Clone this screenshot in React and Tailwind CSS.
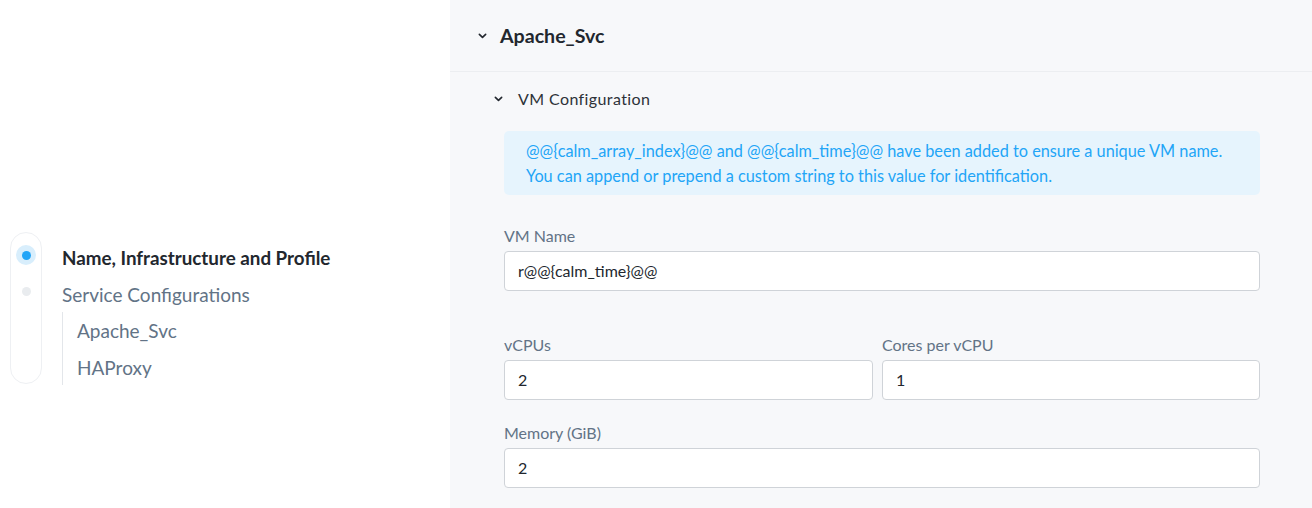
import React from 'react';

const Chevron = ({ className }) => (
  <svg viewBox="0 0 10 6" className={className} fill="none">
    <path d="M1.5 1.2 5 4.6l3.5-3.4" stroke="currentColor" strokeWidth="1.8" strokeLinecap="round" strokeLinejoin="round" />
  </svg>
);

const Field = ({ label, value, className = '' }) => (
  <div className={className}>
    <div className="h-5 text-[16px] leading-5 text-[#627386] mb-[5px]">{label}</div>
    <div className="h-10 bg-white border border-[#cfd3d8] rounded-[4px] flex items-center px-[13px] text-[16px] text-[#22272e]">
      {value}
    </div>
  </div>
);

export default function App() {
  return (
    <div className="flex w-[1312px] h-[508px] overflow-hidden bg-white font-['Lato','Liberation_Sans',sans-serif]">
      {/* Left: step navigation */}
      <aside className="w-[450px] shrink-0 pl-[10px] pt-[232px]">
        <div className="flex">
          <div className="w-[32px] h-[152px] border border-[#eef0f3] rounded-full flex flex-col items-center pt-[12px]">
            <div className="w-[20px] h-[20px] rounded-full bg-[#d8eefc] flex items-center justify-center">
              <div className="w-[9px] h-[9px] rounded-full bg-[#22a5f7]" />
            </div>
            <div className="w-[9px] h-[9px] rounded-full bg-[#e9ecef] mt-[22px]" />
          </div>
          <div className="ml-[20px] pt-[13px]">
            <div className="text-[18.8px] leading-[26px] font-bold text-[#22272e]">Name, Infrastructure and Profile</div>
            <div className="text-[19px] leading-[26px] text-[#627386] mt-[11px]">Service Configurations</div>
            <div className="border-l border-[#e3e6ea] mt-[4px] pl-[14px] pt-[6px] pb-[4px]">
              <div className="text-[19px] leading-[26px] text-[#627386]">Apache_Svc</div>
              <div className="text-[19px] leading-[26px] text-[#627386] mt-[11px]">HAProxy</div>
            </div>
          </div>
        </div>
      </aside>

      {/* Right: service config */}
      <main className="flex-1 bg-[#f7f8fa]">
        <div className="h-[72px] border-b border-[#eceef1] flex items-center pl-[28px]">
          <Chevron className="w-[9px] h-[6px] text-[#22272e]" />
          <span className="ml-[13px] text-[19.6px] font-bold text-[#22272e]">Apache_Svc</span>
        </div>
        <div className="pl-[44px] pt-[17px]">
          <div className="flex items-center h-[20px]">
            <Chevron className="w-[9px] h-[6px] text-[#22272e]" />
            <span className="ml-[15px] text-[16px] tracking-[0.4px] text-[#2d3238]">VM Configuration</span>
          </div>
        </div>
        <div className="pl-[54px] pr-[52px] pt-[22px]">
          <div className="bg-[#e6f4fd] rounded-[5px] px-[22px] py-[7px] text-[16.3px] leading-[25px] text-[#22a5f7]">
            <div>@@{'{'}calm_array_index{'}'}@@ and @@{'{'}calm_time{'}'}@@ have been added to ensure a unique VM name.</div>
            <div>You can append or prepend a custom string to this value for identification.</div>
          </div>
          <Field label="VM Name" value="r@@{calm_time}@@" className="mt-[31px]" />
          <div className="grid grid-cols-[369px_1fr] gap-[9px] mt-[44px]">
            <Field label="vCPUs" value="2" />
            <Field label="Cores per vCPU" value="1" />
          </div>
          <Field label="Memory (GiB)" value="2" className="mt-[23px]" />
        </div>
      </main>
    </div>
  );
}
